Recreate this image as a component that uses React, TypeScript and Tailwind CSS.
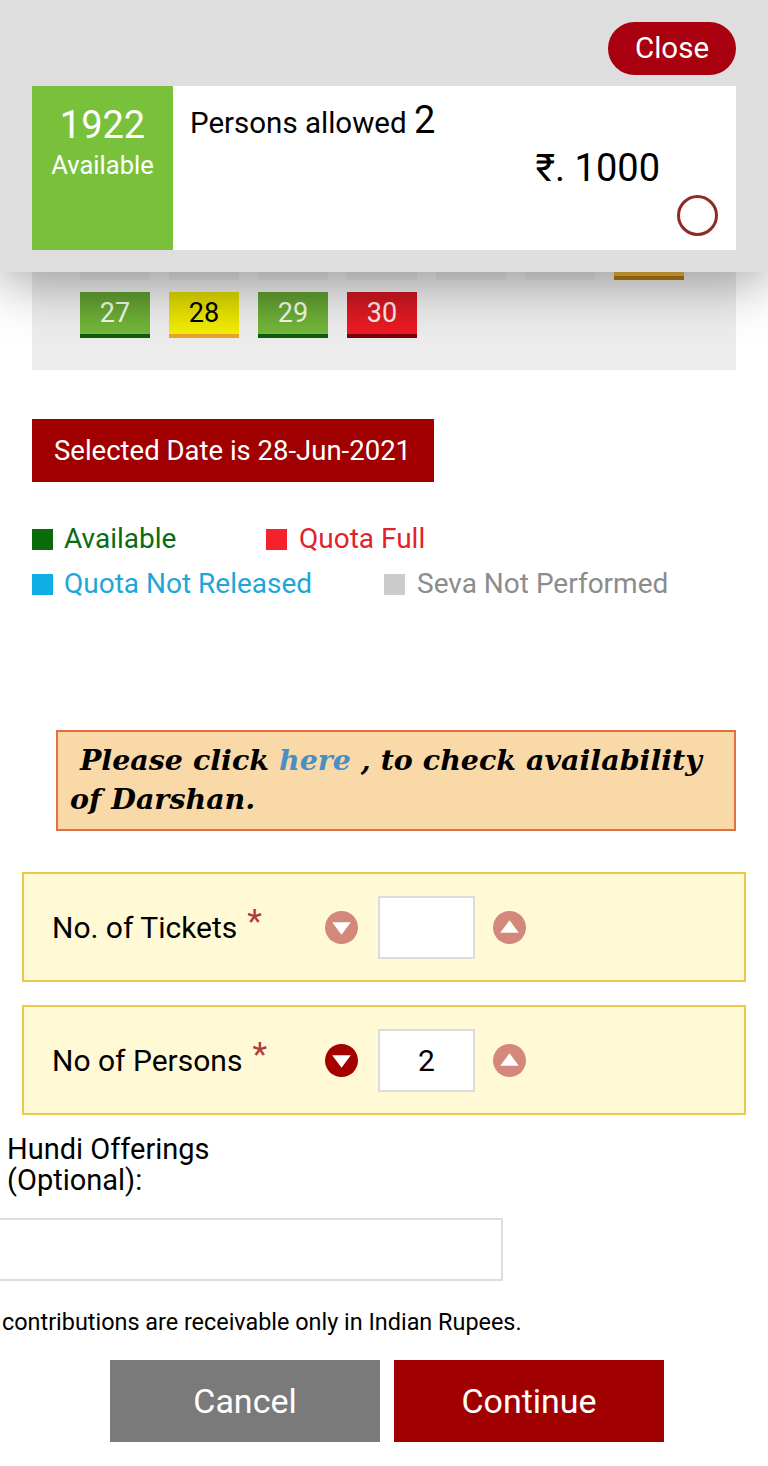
import React from "react";

const font = { fontFamily: "Roboto, 'Noto Sans', sans-serif" };

type Cell = { day: string; kind: "green" | "yellow" | "red" | "gray" | "orange" };

// earlier weeks sit under the popup, only their bottom edge shows
const rows: Cell[][] = [
  Array.from({ length: 7 }, () => ({ day: "", kind: "gray" as const })),
  Array.from({ length: 7 }, () => ({ day: "", kind: "gray" as const })),
  [
    ...Array.from({ length: 6 }, () => ({ day: "", kind: "gray" as const })),
    { day: "", kind: "orange" as const },
  ],
  [
    { day: "27", kind: "green" },
    { day: "28", kind: "yellow" },
    { day: "29", kind: "green" },
    { day: "30", kind: "red" },
  ],
];

function DayCell({ cell }: { cell: Cell }) {
  const cls = {
    green: "bg-gradient-to-b from-[#5e9a2f] to-[#74b83b] border-[#0b5e0b] text-[#eef6e4]",
    yellow: "bg-gradient-to-b from-[#d9d400] to-[#f2ee00] border-[#e6a42c] text-black",
    red: "bg-gradient-to-b from-[#c8161f] to-[#ee1c24] border-[#7a0008] text-[#fbe6e6]",
    gray: "bg-[#e4e4e4] border-[#e4e4e4] text-[#999]",
    orange: "bg-[#e9b33c] border-[#b07a10] text-black",
  }[cell.kind];
  return (
    <div className={`h-[46px] w-[70px] border-b-4 flex items-center justify-center text-[27px] ${cls}`}>
      {cell.day}
    </div>
  );
}

function Stepper({ dir, active }: { dir: "up" | "down"; active?: boolean }) {
  const fill = active ? "#a30000" : "#d4877b";
  return (
    <svg width="33" height="33" viewBox="0 0 32 32">
      <circle cx="16" cy="16" r="16" fill={fill} />
      {dir === "down" ? (
        <polygon points="7,11 25,11 16,23" fill="#fff" />
      ) : (
        <polygon points="7,21 25,21 16,9" fill="#fff" />
      )}
    </svg>
  );
}

function CountBox({ label, value, activeDown }: { label: string; value: string; activeDown?: boolean }) {
  return (
    <div className="ml-[22px] w-[724px] h-[110px] bg-[#fffad5] border-2 border-[#e9c94a] flex items-center">
      <div className="w-[301px] pl-[28px] text-[30px] text-black flex items-start">
        <span>{label}</span>
        <span className="ml-[10px] text-[34px] leading-none text-[#b23b3b] -mt-[1px]">*</span>
      </div>
      <Stepper dir="down" active={activeDown} />
      <div className="ml-[20px] w-[97px] h-[63px] bg-white border-2 border-[#dcdcdc] flex items-center justify-center text-[30px] text-black">
        {value}
      </div>
      <div className="ml-[18px]">
        <Stepper dir="up" />
      </div>
    </div>
  );
}

export default function App() {
  return (
    <div className="relative w-[768px] h-[1466px] bg-white overflow-hidden" style={font}>
      {/* calendar (mostly under the popup) */}
      <div className="ml-[32px] w-[704px] bg-[#ececec] pt-[118px] pb-[32px] pl-[48px] flex flex-col gap-[12px]">
        {rows.map((r, i) => (
          <div key={i} className="flex gap-[19px]">
            {r.map((c, j) => (
              <DayCell key={j} cell={c} />
            ))}
          </div>
        ))}
      </div>

      <div className="mt-[49px] ml-[32px] w-[402px] h-[63px] bg-[#a00000] text-white text-[27.5px] flex items-center pl-[22px]">
        Selected Date is 28-Jun-2021
      </div>

      {/* legend */}
      <div className="mt-[41px] ml-[32px] text-[28px] leading-[32px]">
        <div className="flex items-center">
          <div className="w-[234px] flex items-center">
            <span className="w-[21px] h-[21px] bg-[#0a6b0a] mr-[11px]" />
            <span className="text-[#0b6b12]">Available</span>
          </div>
          <span className="w-[21px] h-[21px] bg-[#f3222c] mr-[12px]" />
          <span className="text-[#e2232b]">Quota Full</span>
        </div>
        <div className="flex items-center mt-[13px]">
          <div className="w-[352px] flex items-center">
            <span className="w-[21px] h-[21px] bg-[#0faee6] mr-[11px]" />
            <span className="text-[#1ea6d8]">Quota Not Released</span>
          </div>
          <span className="w-[21px] h-[21px] bg-[#cccccc] mr-[12px]" />
          <span className="text-[#8c8c8c]">Seva Not Performed</span>
        </div>
      </div>

      {/* darshan notice */}
      <div
        className="mt-[130px] ml-[56px] w-[680px] h-[101px] bg-[#fad9a9] border-2 border-[#e3703f] pl-[12px] pt-[9px] text-[28.5px] leading-[39px] font-bold italic text-black whitespace-nowrap"
        style={{ fontFamily: "'DejaVu Serif', serif" }}
      >
        &nbsp;Please click <span className="text-[#4a8fc4]">here</span> , to check availability
        <br />
        of Darshan.
      </div>

      <div className="mt-[41px]">
        <CountBox label="No. of Tickets" value="" />
      </div>
      <div className="mt-[23px]">
        <CountBox label="No of Persons" value="2" activeDown />
      </div>

      <div className="mt-[19px] ml-[7px] text-[29px] leading-[31px] text-black">
        <div>Hundi Offerings</div>
        <div>(Optional):</div>
      </div>
      <div className="mt-[22px] -ml-[12px] w-[515px] h-[63px] border-2 border-[#dedede] bg-white" />
      <div className="mt-[24px] ml-[2px] text-[23.4px] text-black">
        contributions are receivable only in Indian Rupees.
      </div>

      <div className="mt-[20px] ml-[110px] flex gap-[14px]">
        <button className="w-[270px] h-[82px] bg-[#7a7a7a] text-white text-[34px]">Cancel</button>
        <button className="w-[270px] h-[82px] bg-[#a00000] text-white text-[34px]">Continue</button>
      </div>

      {/* popup over the page */}
      <div className="absolute top-0 left-0 w-[768px] h-[272px] bg-[#dedede] shadow-[0_12px_50px_rgba(0,0,0,0.35)]">
        <div className="flex justify-end pr-[32px] pt-[22px]">
          <button className="w-[128px] h-[53px] rounded-full bg-[#a8000f] text-white text-[29.5px]">Close</button>
        </div>
        <div className="mt-[11px] ml-[32px] w-[704px] h-[164px] bg-white flex">
          <div className="w-[141px] bg-[#7ac13b] text-white flex flex-col items-center pt-[17px]">
            <span className="text-[38px] leading-[44px]">1922</span>
            <span className="text-[25.5px] leading-[36px]">Available</span>
          </div>
          <div className="flex-1 pl-[17px] pt-[14px] relative">
            <div className="text-black text-[29.5px] leading-[40px]">
              Persons allowed <span className="text-[38px]">2</span>
            </div>
            <div className="text-black text-[38px] leading-[44px] text-right pr-[76px] mt-[3px]">₹. 1000</div>
            <div className="flex justify-end pr-[18px] mt-[5px]">
              <span className="w-[41px] h-[41px] rounded-full border-[3px] border-[#8d2b2b]" />
            </div>
          </div>
        </div>
      </div>
    </div>
  );
}
